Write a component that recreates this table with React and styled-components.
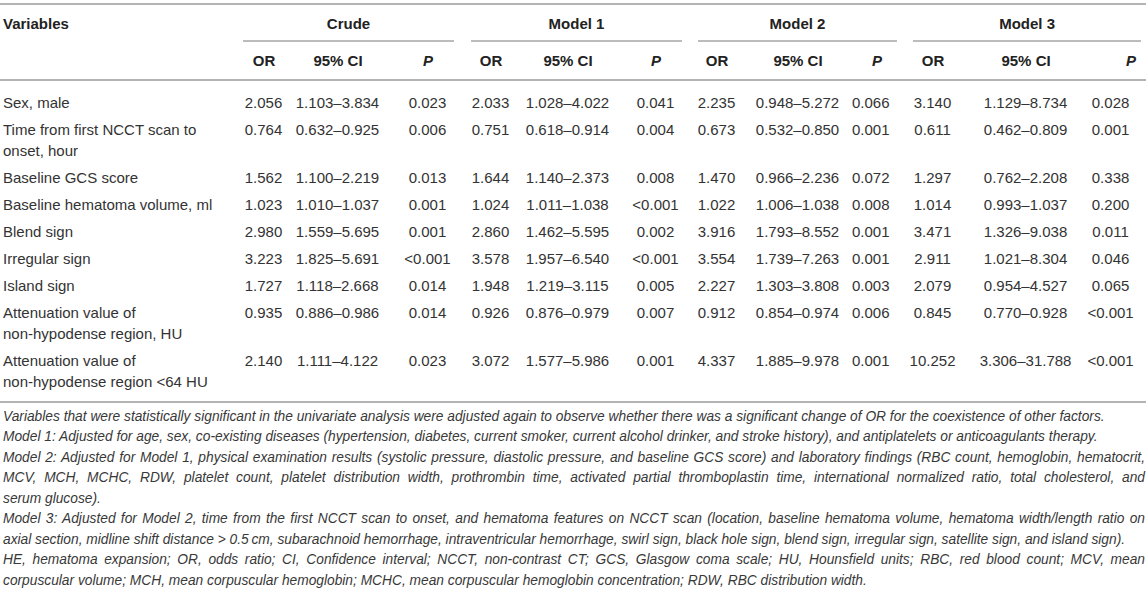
import React from 'react';
import styled, { createGlobalStyle } from 'styled-components';

const GlobalStyle = createGlobalStyle`
  html, body {
    margin: 0;
    padding: 0;
    background: #fff;
  }
  body {
    font-family: "Liberation Sans", Arial, sans-serif;
    color: #333;
  }
`;

const Page = styled.div`
  width: 1146px;
  padding-top: 3px;
`;

const Table = styled.table`
  width: 1146px;
  table-layout: fixed;
  border-collapse: separate;
  border-spacing: 0;
  border-top: 2px solid #b3b3b3;
  border-bottom: 2px solid #b3b3b3;
  font-size: 15px;
  line-height: 21px;
`;

const Th = styled.th`
  padding: ${p => (p.$group ? '8px 0 0' : '8px 0')};
  padding-left: ${p => (p.$left ? '3px' : `${p.$nudge || 0}px`)};
  text-align: ${p => (p.$left ? 'left' : 'center')};
  vertical-align: top;
  font-weight: bold;
  color: #222;
  white-space: nowrap;
  border-bottom: ${p => (p.$group ? 'none' : '2px solid #b3b3b3')};
`;

const GroupLabel = styled.div`
  margin: ${p => p.$inset};
  padding-bottom: 6px;
  border-bottom: 2px solid #bcbcbc;
`;

const Row = styled.tr`
  td {
    padding-top: ${p => (p.$first ? '10.5px' : '3px')};
    padding-bottom: ${p => (p.$last ? '9.5px' : '3px')};
  }
`;

const Td = styled.td`
  vertical-align: top;
  text-align: ${p => (p.$left ? 'left' : 'center')};
  padding-left: ${p => (p.$left ? '3px' : '0')};
  white-space: ${p => (p.$left ? 'pre-line' : 'nowrap')};
  color: #333;
`;

const Notes = styled.div`
  margin-top: 3.75px;
  padding: 0 1px 0 3px;
  font-size: 13.75px;
  line-height: 20.5px;
  font-style: italic;
  color: #383838;
`;

const Note = styled.p`
  margin: 0;
`;

// one printed line of a note; inner lines are stretched to the full width
const Line = styled.span`
  display: block;
  text-align: justify;
  text-align-last: ${p => (p.$fill ? 'justify' : 'auto')};
`;

const widths = [240, 48, 100, 80, 46, 108, 68, 54, 108, 38, 86, 100, 70];

const groups = [
  { name: 'Crude', inset: '0 14px 0 3px', nudge: 0 },
  { name: 'Model 1', inset: '0 8px 0 3px', nudge: 0 },
  { name: 'Model 2', inset: '0 -7px 0 8px', nudge: 12 },
  { name: 'Model 3', inset: '0 5px 0 23px', nudge: 40 },
];

const rows = [
  ['Sex, male', '2.056', '1.103–3.834', '0.023', '2.033', '1.028–4.022', '0.041', '2.235', '0.948–5.272', '0.066', '3.140', '1.129–8.734', '0.028'],
  ['Time from first NCCT scan to\nonset, hour', '0.764', '0.632–0.925', '0.006', '0.751', '0.618–0.914', '0.004', '0.673', '0.532–0.850', '0.001', '0.611', '0.462–0.809', '0.001'],
  ['Baseline GCS score', '1.562', '1.100–2.219', '0.013', '1.644', '1.140–2.373', '0.008', '1.470', '0.966–2.236', '0.072', '1.297', '0.762–2.208', '0.338'],
  ['Baseline hematoma volume, ml', '1.023', '1.010–1.037', '0.001', '1.024', '1.011–1.038', '<0.001', '1.022', '1.006–1.038', '0.008', '1.014', '0.993–1.037', '0.200'],
  ['Blend sign', '2.980', '1.559–5.695', '0.001', '2.860', '1.462–5.595', '0.002', '3.916', '1.793–8.552', '0.001', '3.471', '1.326–9.038', '0.011'],
  ['Irregular sign', '3.223', '1.825–5.691', '<0.001', '3.578', '1.957–6.540', '<0.001', '3.554', '1.739–7.263', '0.001', '2.911', '1.021–8.304', '0.046'],
  ['Island sign', '1.727', '1.118–2.668', '0.014', '1.948', '1.219–3.115', '0.005', '2.227', '1.303–3.808', '0.003', '2.079', '0.954–4.527', '0.065'],
  ['Attenuation value of\nnon-hypodense region, HU', '0.935', '0.886–0.986', '0.014', '0.926', '0.876–0.979', '0.007', '0.912', '0.854–0.974', '0.006', '0.845', '0.770–0.928', '<0.001'],
  ['Attenuation value of\nnon-hypodense region <64 HU', '2.140', '1.111–4.122', '0.023', '3.072', '1.577–5.986', '0.001', '4.337', '1.885–9.978', '0.001', '10.252', '3.306–31.788', '<0.001'],
];

const notes = [
  ['Variables that were statistically significant in the univariate analysis were adjusted again to observe whether there was a significant change of OR for the coexistence of other factors.'],
  ['Model 1: Adjusted for age, sex, co-existing diseases (hypertension, diabetes, current smoker, current alcohol drinker, and stroke history), and antiplatelets or anticoagulants therapy.'],
  [
    'Model 2: Adjusted for Model 1, physical examination results (systolic pressure, diastolic pressure, and baseline GCS score) and laboratory findings (RBC count, hemoglobin, hematocrit,',
    'MCV, MCH, MCHC, RDW, platelet count, platelet distribution width, prothrombin time, activated partial thromboplastin time, international normalized ratio, total cholesterol, and',
    'serum glucose).',
  ],
  [
    'Model 3: Adjusted for Model 2, time from the first NCCT scan to onset, and hematoma features on NCCT scan (location, baseline hematoma volume, hematoma width/length ratio on',
    'axial section, midline shift distance > 0.5\u2009cm, subarachnoid hemorrhage, intraventricular hemorrhage, swirl sign, black hole sign, blend sign, irregular sign, satellite sign, and island sign).',
  ],
  [
    'HE, hematoma expansion; OR, odds ratio; CI, Confidence interval; NCCT, non-contrast CT; GCS, Glasgow coma scale; HU, Hounsfield units; RBC, red blood count; MCV, mean',
    'corpuscular volume; MCH, mean corpuscular hemoglobin; MCHC, mean corpuscular hemoglobin concentration; RDW, RBC distribution width.',
  ],
];

export default function App() {
  return (
    <Page>
      <GlobalStyle />
      <Table>
        <colgroup>
          {widths.map((w, i) => (
            <col key={i} style={{ width: w }} />
          ))}
        </colgroup>
        <thead>
          <tr>
            <Th $left rowSpan={2}>Variables</Th>
            {groups.map(g => (
              <Th key={g.name} $group colSpan={3}>
                <GroupLabel $inset={g.inset}>{g.name}</GroupLabel>
              </Th>
            ))}
          </tr>
          <tr>
            {groups.map(g => (
              <React.Fragment key={g.name}>
                <Th>OR</Th>
                <Th>95% CI</Th>
                <Th $nudge={g.nudge}><i>P</i></Th>
              </React.Fragment>
            ))}
          </tr>
        </thead>
        <tbody>
          {rows.map((r, i) => (
            <Row key={i} $first={i === 0} $last={i === rows.length - 1}>
              {r.map((c, j) => (
                <Td key={j} $left={j === 0}>{c}</Td>
              ))}
            </Row>
          ))}
        </tbody>
      </Table>
      <Notes>
        {notes.map((lines, i) => (
          <Note key={i}>
            {lines.map((text, j) => (
              <Line key={j} $fill={j < lines.length - 1}>
                {text}
              </Line>
            ))}
          </Note>
        ))}
      </Notes>
    </Page>
  );
}
